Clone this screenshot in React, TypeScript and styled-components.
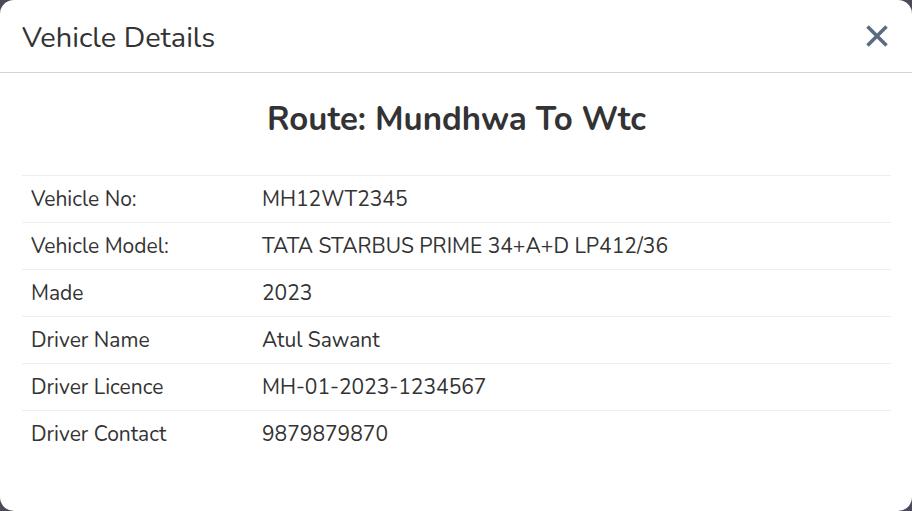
import styled, { createGlobalStyle } from "styled-components";

const GlobalStyle = createGlobalStyle`
  html, body {
    margin: 0;
    padding: 0;
    background: #4b4a5a;
  }
  body {
    font-family: "Nunito", Lato, "Noto Sans", sans-serif;
    color: #333;
  }
`;

const Modal = styled.div`
  width: 912px;
  height: 511px;
  background: #fff;
  border-radius: 14px;
  overflow: hidden;
  display: flex;
  flex-direction: column;
  box-sizing: border-box;
`;

const Header = styled.header`
  height: 73px;
  box-sizing: border-box;
  display: flex;
  align-items: center;
  justify-content: space-between;
  padding: 0 22px;
  border-bottom: 1px solid #cad7e0;
`;

const Title = styled.h2`
  margin: 0;
  font-size: 29px;
  font-weight: 400;
  color: #333;
  padding-top: 2px;
`;

const CloseButton = styled.button`
  border: none;
  background: none;
  padding: 0;
  width: 26px;
  height: 26px;
  display: flex;
  align-items: center;
  justify-content: center;
  cursor: pointer;
`;

const Body = styled.div`
  padding: 27px 21px 0 22px;
`;

const RouteHeading = styled.h1`
  margin: 0 0 35px;
  text-align: center;
  font-size: 33px;
  font-weight: 700;
  color: #333;
  line-height: 40px;
`;

const Table = styled.table`
  width: 100%;
  border-collapse: collapse;
  table-layout: fixed;
  font-size: 21px;
  color: #333;
`;

const LabelCol = styled.col`
  width: 231px;
`;

const Row = styled.tr`
  border-top: 1px solid #eeeeee;
  height: 47px;
`;

const Cell = styled.td`
  padding: 0 9px;
  vertical-align: middle;
  white-space: nowrap;
`;

const rows: [string, string][] = [
  ["Vehicle No:", "MH12WT2345"],
  ["Vehicle Model:", "TATA STARBUS PRIME 34+A+D LP412/36"],
  ["Made", "2023"],
  ["Driver Name", "Atul Sawant"],
  ["Driver Licence", "MH-01-2023-1234567"],
  ["Driver Contact", "9879879870"],
];

export default function App() {
  return (
    <>
      <GlobalStyle />
      <Modal>
        <Header>
          <Title>Vehicle Details</Title>
          <CloseButton aria-label="Close">
            <svg width="24" height="24" viewBox="0 0 24 24">
              <path
                d="M2.5 2.5 L21.5 21.5 M21.5 2.5 L2.5 21.5"
                stroke="#5b6b80"
                strokeWidth="3.6"
                fill="none"
              />
            </svg>
          </CloseButton>
        </Header>
        <Body>
          <RouteHeading>Route: Mundhwa To Wtc</RouteHeading>
          <Table>
            <colgroup>
              <LabelCol />
              <col />
            </colgroup>
            <tbody>
              {rows.map(([label, value]) => (
                <Row key={label}>
                  <Cell>{label}</Cell>
                  <Cell>{value}</Cell>
                </Row>
              ))}
            </tbody>
          </Table>
        </Body>
      </Modal>
    </>
  );
}
